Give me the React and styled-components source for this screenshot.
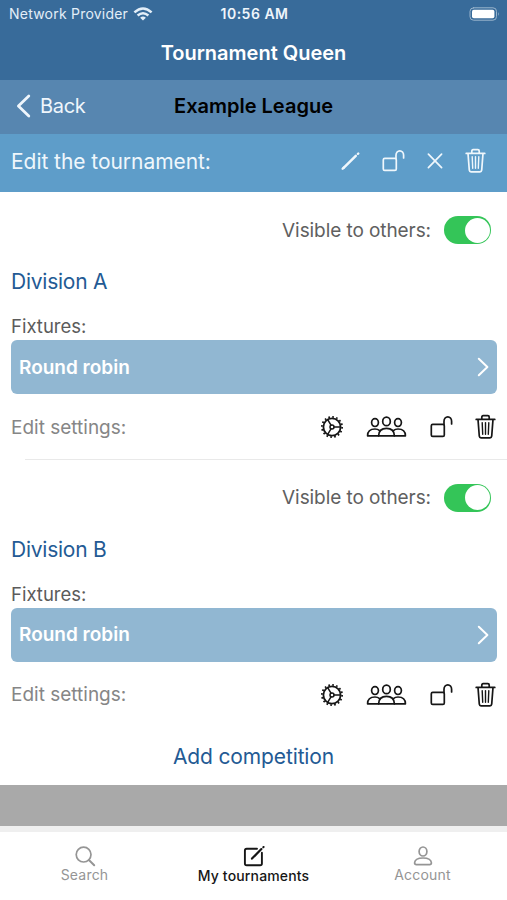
import { useState } from "react";
import styled, { createGlobalStyle } from "styled-components";

const GlobalStyle = createGlobalStyle`
    * {
        box-sizing: border-box;
    }
    body {
        margin: 0;
        background-color: white;
        font-family: Inter, "Liberation Sans", sans-serif;
    }
    svg {
        display: block;
        flex-shrink: 0;
    }
`;

const Container = styled.div`
    height: 900px;
    display: flex;
    flex-direction: column;
    overflow: hidden;
`;

const Header = styled.header`
    height: 79.5px;
    background-color: #386b9a;
    color: white;
`;

const StatusBar = styled.div`
    height: 27px;
    padding: 0 7px 0 9px;
    display: grid;
    grid-template-columns: 1fr auto 1fr;
    align-items: center;
    font-size: 14px;
`;

const Network = styled.div`
    display: flex;
    align-items: center;
    gap: 5px;
    color: #e3eef8;
    letter-spacing: 0.22px;
`;

const Time = styled.div`
    font-weight: 600;
    color: #eef5fb;
    letter-spacing: 0.5px;
`;

const Battery = styled.div`
    justify-self: end;
`;

const AppTitle = styled.h1`
    margin: 0;
    height: 52px;
    line-height: 52px;
    text-align: center;
    font-size: 20px;
    font-weight: 600;
`;

const NavBar = styled.nav`
    height: 54px;
    padding: 0 16px;
    display: grid;
    grid-template-columns: 1fr auto 1fr;
    align-items: center;
    background-color: #5786b0;
`;

const Back = styled.button`
    padding: 0 0 1px;
    border: none;
    background: none;
    display: flex;
    align-items: center;
    gap: 9px;
    color: #eff6fc;
    font: inherit;
    font-size: 20px;
    letter-spacing: -0.3px;
`;

const NavTitle = styled.h2`
    margin: 0;
    padding-bottom: 1px;
    font-size: 20px;
    font-weight: 600;
    letter-spacing: 0;
    color: black;
`;

const EditBar = styled.div`
    height: 58px;
    padding: 0 21px 3px 11px;
    display: flex;
    align-items: center;
    justify-content: space-between;
    background-color: #5e9dc9;
    color: #eff7fc;
    font-size: 21px;
    letter-spacing: -0.05px;
`;

const Icons = styled.div`
    display: flex;
    align-items: center;
    gap: 22px;
`;

const Division = styled.section`
    height: 267.5px;
    padding: 24px 10px 0 11px;
`;

const Visibility = styled.div`
    height: 29px;
    padding-right: 6px;
    display: flex;
    align-items: center;
    justify-content: flex-end;
    gap: 13px;
    font-size: 19px;
    letter-spacing: -0.08px;
    color: #606060;
`;

const Toggle = styled.button`
    width: 47px;
    height: 28px;
    padding: 1.5px;
    border: none;
    border-radius: 14px;
    display: flex;
    justify-content: ${(props) => (props.$on ? "flex-end" : "flex-start")};
    background-color: ${(props) => (props.$on ? "#34c558" : "#e2e2e4")};
`;

const Knob = styled.span`
    width: 25px;
    height: 25px;
    border-radius: 50%;
    background-color: white;
`;

const DivisionName = styled.h3`
    margin: 23.5px 0 0;
    height: 27px;
    line-height: 27px;
    font-size: 21px;
    font-weight: 400;
    letter-spacing: -0.25px;
    color: #235a94;
`;

const Label = styled.div`
    margin-top: 18px;
    height: 27.4px;
    line-height: 27px;
    font-size: 18.5px;
    letter-spacing: 0;
    color: #5b5b5b;
`;

const Fixture = styled.button`
    width: 100%;
    height: 54px;
    padding: 0 8px;
    border: none;
    border-radius: 6px;
    display: flex;
    align-items: center;
    justify-content: space-between;
    background-color: #91b7d2;
    color: white;
    font: inherit;
    font-size: 19px;
    font-weight: 600;
`;

const Settings = styled.div`
    margin-top: 20.2px;
    height: 25px;
    padding-right: 1px;
    display: flex;
    align-items: center;
    justify-content: space-between;
    font-size: 19px;
    color: #868686;

    ${Icons} {
        color: #161616;
    }
`;

const Divider = styled.hr`
    margin: 19px -10px 0 14px;
    border: none;
    border-top: 1.5px solid #e9e9e9;
`;

const AddCompetition = styled.button`
    height: 58.5px;
    padding: 1px 0 0;
    border: none;
    background: none;
    font: inherit;
    font-size: 21px;
    letter-spacing: -0.13px;
    color: #235a94;
`;

const Filler = styled.div`
    height: 41px;
    background-color: #a9a9a9;
`;

const TabBar = styled.footer`
    flex: 1;
    border-top: 6px solid #efefef;
    display: grid;
    grid-template-columns: repeat(3, 1fr);
`;

const Tab = styled.div`
    padding-top: 13.5px;
    display: flex;
    flex-direction: column;
    align-items: center;
    font-size: 14px;
    line-height: ${(props) => (props.$active ? "18px" : "16px")};
    letter-spacing: ${(props) => (props.$active ? "0.15px" : "0.2px")};
    font-weight: ${(props) => (props.$active ? 500 : 400)};
    color: ${(props) => (props.$active ? "#161616" : "#959595")};
`;

const Svg = ({ w, h, sw = 1.7, children }) => (
  <svg
    width={w}
    height={h}
    viewBox={`0 0 ${w} ${h}`}
    fill="none"
    stroke="currentColor"
    strokeWidth={sw}
    strokeLinecap="round"
    strokeLinejoin="round"
  >
    {children}
  </svg>
);

const WifiIcon = () => (
  <Svg w={20} h={14} sw={2.5}>
    <path d="M1.4 5.4Q10-2.4 18.6 5.4M4.6 8.5Q10 4 15.4 8.5" strokeLinecap="butt" />
    <path d="M7.1 10.7Q10 8.3 12.9 10.7L10 13.6Z" fill="currentColor" stroke="none" />
  </Svg>
);

const BatteryIcon = () => (
  <Svg w={31} h={14} sw={1}>
    <rect x="1" y="0.8" width="26.5" height="12.4" rx="3.6" stroke="#9bb5cc" />
    <rect x="3" y="2.7" width="22.4" height="8.6" rx="1.8" fill="white" stroke="none" />
    <path d="M29 5Q30.6 7 29 9Z" fill="#9bb5cc" stroke="none" />
  </Svg>
);

const PencilIcon = () => (
  <Svg w={19} h={24}>
    <path d="M2.6 18.8L14.8 6.8" strokeWidth="2.5" />
    <path d="M1.6 19.8L2.8 18.6M16.9 4.9L17.3 4.5" strokeWidth="2.3" />
  </Svg>
);

const UnlockIcon = () => (
  <Svg w={23} h={24}>
    <rect x="1.3" y="9.3" width="13" height="12" rx="1.4" />
    <path d="M14 9.3V6.2A3.8 4.4 0 0 1 21.6 6.2V9" />
  </Svg>
);

const CloseIcon = () => (
  <Svg w={16} h={24}>
    <path d="M1.4 5.2L14.6 18.6M14.6 5.2L1.4 18.6" />
  </Svg>
);

const TrashIcon = () => (
  <Svg w={21} h={26}>
    <path d="M1.2 5.4H19.8M3 5.4L4.3 22.2Q4.5 23.8 6 23.8H15Q16.5 23.8 16.7 22.2L18 5.4" />
    <path d="M6.8 5.2V3Q6.8 1.7 8.1 1.7H12.9Q14.2 1.7 14.2 3V5.2" />
    <path d="M7.2 8.6L7.7 20.2M10.5 8.6V20.2M13.8 8.6L13.3 20.2" strokeWidth="1.4" />
  </Svg>
);

const GearIcon = () => (
  <Svg w={24} h={24}>
    <circle cx="12" cy="12" r="8.6" strokeWidth="1.8" />
    <circle cx="12" cy="12" r="10.1" strokeWidth="1.8" strokeDasharray="1.7 2.26" strokeLinecap="butt" />
    <circle cx="12" cy="12" r="2" strokeWidth="1.5" />
    <path d="M14 12H20.4M11 10.2L7.7 4.6M11 13.8L7.7 19.4" strokeWidth="1.5" />
  </Svg>
);

const PeopleIcon = () => (
  <Svg w={42} h={24}>
    <ellipse cx="20.5" cy="6.4" rx="3.8" ry="4.2" />
    <path d="M12.6 20.8Q12.8 13.3 20.5 13.3T28.4 20.8Z" />
    <ellipse cx="9" cy="7.6" rx="3.4" ry="3.9" />
    <path d="M12.6 20.8H1.6Q1.6 14 9 14Q11.8 14 13.6 15.6" />
    <ellipse cx="32" cy="7.6" rx="3.4" ry="3.9" />
    <path d="M28.4 20.8H39.4Q39.4 14 32 14Q29.2 14 27.4 15.6" />
  </Svg>
);

const SearchIcon = () => (
  <Svg w={22} h={21}>
    <circle cx="9.6" cy="8.6" r="7.4" />
    <path d="M14.9 14L20.2 19.2" strokeWidth="2" />
  </Svg>
);

const ComposeIcon = () => (
  <Svg w={24} h={21} sw={1.9}>
    <path d="M15 2.8H4.7Q2.9 2.8 2.9 4.6V17.4Q2.9 19.2 4.7 19.2H18.1Q19.9 19.2 19.9 17.4V6.8" />
    <path d="M10 12.6L19.4 3.1" strokeWidth="2.2" />
    <path d="M21.3 1.3L21.6 1" strokeWidth="2" />
  </Svg>
);

const UserIcon = () => (
  <Svg w={20} h={21}>
    <ellipse cx="10" cy="5.5" rx="3.9" ry="4.5" />
    <path d="M1.6 16.8C1.8 14 5 12 10 12S18.2 14 18.4 16.8Q18.4 18.7 16.6 18.7H3.4Q1.6 18.7 1.6 16.8Z" />
  </Svg>
);

const Competition = ({ name, divider }) => {
  const [visible, setVisible] = useState(true);

  return (
    <Division>
      <Visibility>
        Visible to others:
        <Toggle $on={visible} onClick={() => setVisible(!visible)}>
          <Knob />
        </Toggle>
      </Visibility>
      <DivisionName>{name}</DivisionName>
      <Label>Fixtures:</Label>
      <Fixture>
        Round robin
        <Svg w={12} h={20} sw={2}>
          <path d="M1.8 1.8L10.4 10L1.8 18.2" />
        </Svg>
      </Fixture>
      <Settings>
        Edit settings:
        <Icons>
          <GearIcon />
          <PeopleIcon />
          <UnlockIcon />
          <TrashIcon />
        </Icons>
      </Settings>
      {divider && <Divider />}
    </Division>
  );
};

const App = () => {
  return (
    <Container>
      <GlobalStyle />
      <Header>
        <StatusBar>
          <Network>
            Network Provider <WifiIcon />
          </Network>
          <Time>10:56 AM</Time>
          <Battery>
            <BatteryIcon />
          </Battery>
        </StatusBar>
        <AppTitle>Tournament Queen</AppTitle>
      </Header>
      <NavBar>
        <Back>
          <Svg w={15} h={24} sw={2.8}>
            <path d="M12.8 2L2.4 12L12.8 22" />
          </Svg>
          Back
        </Back>
        <NavTitle>Example League</NavTitle>
      </NavBar>
      <EditBar>
        Edit the tournament:
        <Icons>
          <PencilIcon />
          <UnlockIcon />
          <CloseIcon />
          <TrashIcon />
        </Icons>
      </EditBar>
      <Competition name="Division A" divider />
      <Competition name="Division B" />
      <AddCompetition>Add competition</AddCompetition>
      <Filler />
      <TabBar>
        <Tab>
          <SearchIcon />
          Search
        </Tab>
        <Tab $active>
          <ComposeIcon />
          My tournaments
        </Tab>
        <Tab>
          <UserIcon />
          Account
        </Tab>
      </TabBar>
    </Container>
  );
};

export default App;
